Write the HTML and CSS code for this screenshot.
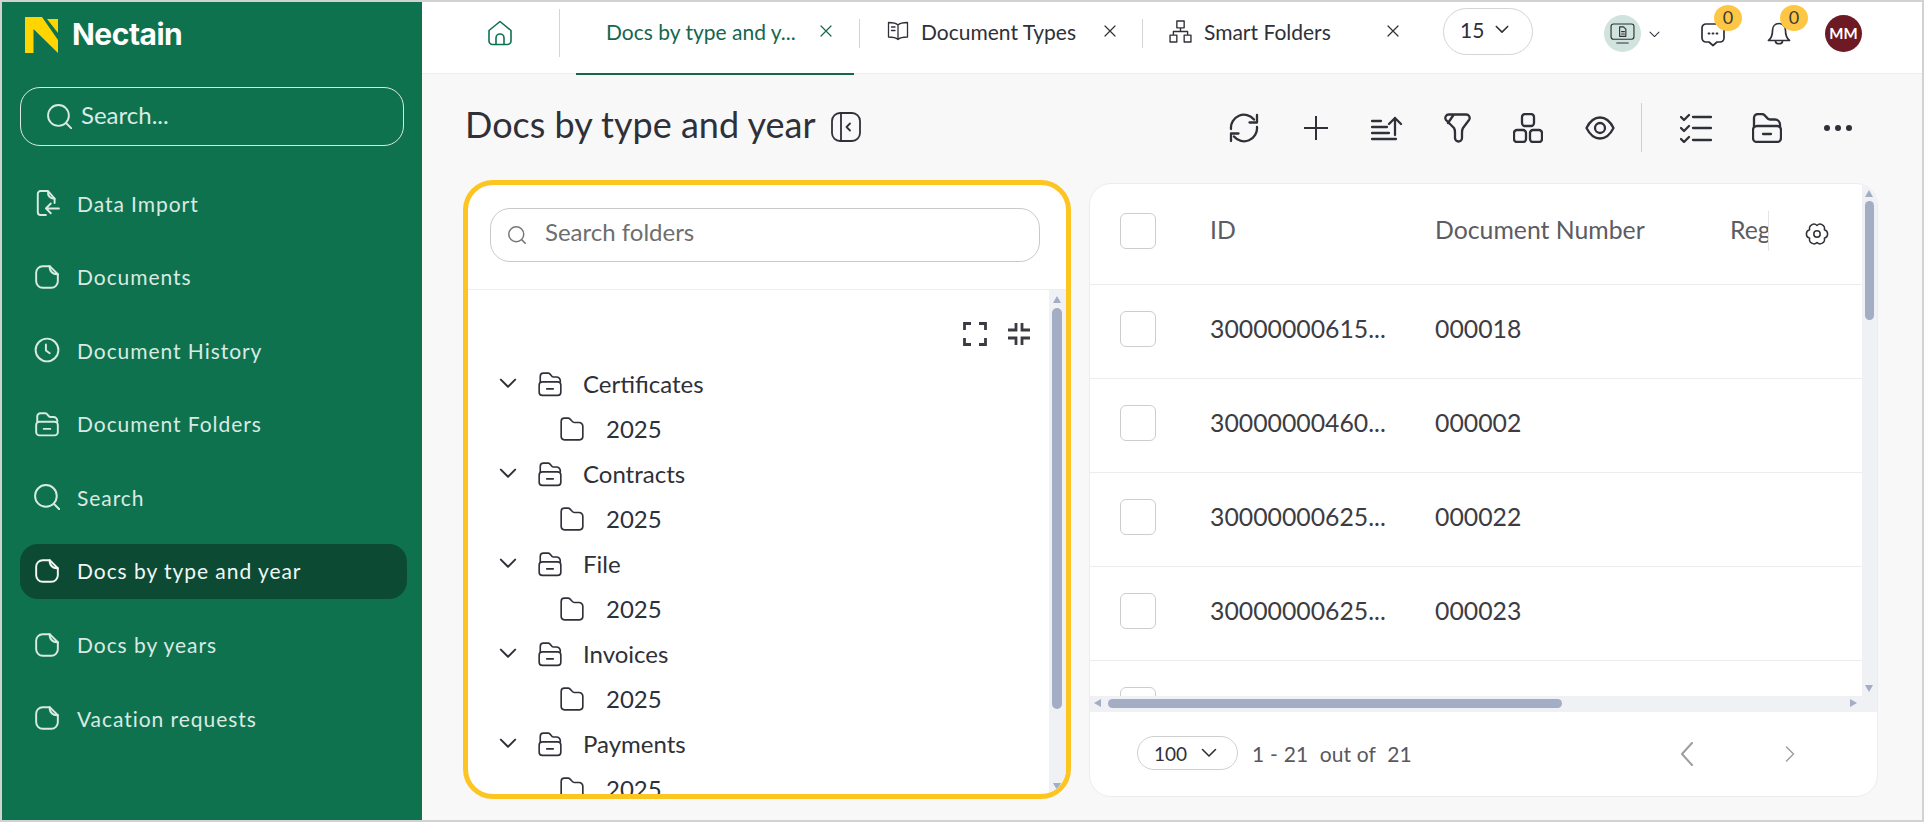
FILE: index.html
```html
<!DOCTYPE html>
<html lang="en">
<head>
    <meta charset="UTF-8">
    <title>Nectain - Docs by type and year</title>
    <link rel="stylesheet" href="styles.css">
</head>
<body>
    <svg class="sprite" xmlns="http://www.w3.org/2000/svg">
        <symbol id="i-doc" viewBox="0 0 24 24"><path d="M8 2h6.5L22 9.500V16a6 6 0 0 1-6 6H8a6 6 0 0 1-6-6V8a6 6 0 0 1 6-6z"/><path d="M14.500 2c-.5 4.500 3 8 7.500 7.500"/></symbol>
        <symbol id="i-import" viewBox="0 0 24 24"><path d="M11 23H6a2.500 2.500 0 0 1-2.500-2.500v-17A2.500 2.500 0 0 1 6 1h7l6 7v4"/><path d="M13 1.500c-.5 3.500 1.500 6.500 6 6.500"/><path d="M23 17H11.500M15.500 12.500 11 17l4.500 4.500"/></symbol>
        <symbol id="i-clock" viewBox="0 0 24 24"><circle cx="12" cy="12" r="10.500"/><path d="M11 7v5.500l3.500 2.500"/></symbol>
        <symbol id="i-folder-minus" viewBox="0 0 24 24"><path d="M3 10V5a3 3 0 0 1 3-3h4.500c2 0 2.500 3.500 4.500 3.500h3a3.500 3.500 0 0 1 3.500 3.500v1"/><rect x="2" y="10" width="20" height="12.500" rx="3"/><path d="M9 16.500h6"/></symbol>
        <symbol id="i-folder" viewBox="0 0 24 24"><path d="M2 5a3 3 0 0 1 3-3h3.500c2.500 0 3 4 5.500 4h4.500A3.500 3.500 0 0 1 22 9.500V19a3 3 0 0 1-3 3H5a3 3 0 0 1-3-3z"/></symbol>
        <symbol id="i-search" viewBox="0 0 24 24"><circle cx="11" cy="11" r="10"/><path d="M18.500 18.500 23.500 23.500"/></symbol>
        <symbol id="i-close" viewBox="0 0 12 12"><path d="M1 1l10 10M11 1 1 11"/></symbol>
        <symbol id="i-chevron" viewBox="0 0 16 10"><path d="M1.500 1.500 8 8l6.500-6.500"/></symbol>
    </svg>

    <div class="app">
        <aside class="sidebar">
            <div class="brand">
                <svg class="brand-logo" viewBox="0 0 33 36"><path d="M0 0h17l16 23v13L8.500 12v24H0z"/><path d="M22 2h11v14z"/></svg>
                <span class="brand-name">Nectain</span>
            </div>
            <div class="side-search">
                <svg class="icon side-search-icon"><use href="#i-search"/></svg>
                <span>Search...</span>
            </div>
            <nav class="nav">
                <a class="nav-item"><svg class="icon"><use href="#i-import"/></svg>Data Import</a>
                <a class="nav-item"><svg class="icon"><use href="#i-doc"/></svg>Documents</a>
                <a class="nav-item"><svg class="icon"><use href="#i-clock"/></svg>Document History</a>
                <a class="nav-item"><svg class="icon"><use href="#i-folder-minus"/></svg>Document Folders</a>
                <a class="nav-item"><svg class="icon"><use href="#i-search"/></svg>Search</a>
                <a class="nav-item active"><svg class="icon"><use href="#i-doc"/></svg>Docs by type and year</a>
                <a class="nav-item"><svg class="icon"><use href="#i-doc"/></svg>Docs by years</a>
                <a class="nav-item"><svg class="icon"><use href="#i-doc"/></svg>Vacation requests</a>
            </nav>
        </aside>

        <div class="main">
            <header class="topbar">
                <div class="home">
                    <svg class="home-icon" viewBox="0 0 26 26"><path d="M2 10.500 13 1.500l11 9V21a3.500 3.500 0 0 1-3.500 3.500h-15A3.500 3.500 0 0 1 2 21z"/><path d="M9 24.500V18a4 4 0 0 1 8 0v6.500"/></svg>
                </div>
                <div class="tab tab-active">
                    <span class="tab-label">Docs by type and y...</span>
                    <svg class="tab-close"><use href="#i-close"/></svg>
                </div>
                <div class="tab tab-types">
                    <svg class="tab-icon" viewBox="0 0 22 20"><path d="M11 4C9 2 6 1.500 1.500 1.500v14.500c4.500 0 7.500.5 9.500 2.500 2-2 5-2.500 9.500-2.500V1.500C16 1.500 13 2 11 4zM11 4v14.500M4.500 6h3.500M4.500 9.500h3.500"/></svg>
                    <span class="tab-label">Document Types</span>
                    <svg class="tab-close"><use href="#i-close"/></svg>
                </div>
                <div class="tab tab-folders">
                    <svg class="tab-icon" viewBox="0 0 22 22"><path d="M7.500 1h7v6.500h-7zM1 14.500h6.500V21H1zM14.500 14.500H21V21h-6.500zM11 7.500v3.500M4.200 14.500V11h13.600v3.500"/></svg>
                    <span class="tab-label">Smart Folders</span>
                    <svg class="tab-close"><use href="#i-close"/></svg>
                </div>
                <div class="count-select">15<svg class="chev-sm"><use href="#i-chevron"/></svg></div>
                <div class="top-right">
                    <div class="mode">
                        <svg viewBox="0 0 26 22"><rect x="1" y="1" width="24" height="16" rx="2.500"/><path d="M7 21h12M10 4h4l2.500 2.500V14h-6.500zM12 9h3M12 11.500h3"/></svg>
                    </div>
                    <svg class="chev-mode"><use href="#i-chevron"/></svg>
                    <div class="notify notify-chat">
                        <svg viewBox="0 0 26 26"><path d="M6 3h14a4 4 0 0 1 4 4v10a4 4 0 0 1-4 4h-3l-4 3.500L9 21H6a4 4 0 0 1-4-4V7a4 4 0 0 1 4-4z"/><path class="dots" d="M8.500 12.500h1M12.500 12.500h1M16.500 12.500h1"/></svg>
                        <span class="badge">0</span>
                    </div>
                    <div class="notify notify-bell">
                        <svg viewBox="0 0 26 26"><path d="M13 2.500c-4 0-6.500 3-6.500 7 0 6-1.500 8-4 10h21c-2.500-2-4-4-4-10 0-4-2.500-7-6.500-7z"/><path d="M9.500 20.500c.5 3 6.500 3 7 0"/></svg>
                        <span class="badge">0</span>
                    </div>
                    <div class="avatar">MM</div>
                </div>
            </header>

            <section class="content">
                <div class="page-head">
                    <h1>Docs by type and year</h1>
                    <svg class="panel-toggle" viewBox="0 0 30 30"><rect x="1" y="1" width="28" height="28" rx="8"/><path d="M10 1v28M19 11.500 15.500 15l3.500 3.500"/></svg>
                    <div class="toolbar">
                        <svg class="tool tool-refresh" viewBox="0 0 32 30"><path d="M3 16A13 13 0 0 1 26 6.500M29 14a13 13 0 0 1-23 9.500"/><path d="M29 2v7.500h-7.500M3 28v-7.500h7.500"/></svg>
                        <svg class="tool tool-plus" viewBox="0 0 24 24"><path d="M12 0v24M0 12h24"/></svg>
                        <svg class="tool tool-sort" viewBox="0 0 32 24"><path d="M1 5h9M1 11h15M1 17h17M1 23h24M24 19V2M18 8l6-6 6 6"/></svg>
                        <svg class="tool tool-filter" viewBox="0 0 27 30"><path d="M5 1.500h17a3.500 3.500 0 0 1 3 5.500l-6 8c-1 1.500-1 3-1 5v5a3.500 3.500 0 0 1-7 0v-5c0-2 0-3.500-1-5L2 7A3.500 3.500 0 0 1 5 1.500zM9.500 2 4 10"/></svg>
                        <svg class="tool tool-blocks" viewBox="0 0 30 30"><rect x="9" y="1" width="12" height="12" rx="3"/><rect x="1" y="17" width="12" height="12" rx="3"/><rect x="17" y="17" width="12" height="12" rx="3"/></svg>
                        <svg class="tool tool-eye" viewBox="0 0 30 24"><path d="M1.500 12C5 5 9.500 1.500 15 1.500S25 5 28.500 12C25 19 20.500 22.500 15 22.500S5 19 1.500 12z"/><circle cx="15" cy="12" r="5"/></svg>
                        <span class="tool-sep"></span>
                        <svg class="tool tool-checks" viewBox="0 0 32 30"><path d="M1 4l3 3 5-5M1 15l3 3 5-5M1 26l3 3 5-5M13 4h18M13 15h18M13 27h18"/></svg>
                        <svg class="tool tool-folder" viewBox="0 0 30 30"><path d="M2 14V5a4 4 0 0 1 4-4h4c4 0 4 5.500 8 5.500h5a5 5 0 0 1 5 5v2.500"/><rect x="1" y="13" width="28" height="16" rx="4"/><path d="M11 21h8"/></svg>
                        <svg class="tool tool-dots" viewBox="0 0 28 6"><circle cx="3" cy="3" r="3"/><circle cx="14" cy="3" r="3"/><circle cx="25" cy="3" r="3"/></svg>
                    </div>
                </div>

                <div class="panels">
                    <div class="tree-panel">
                        <div class="tree-search-wrap">
                            <div class="tree-search">
                                <svg class="icon"><use href="#i-search"/></svg>
                                <span>Search folders</span>
                            </div>
                        </div>
                        <div class="tree-body">
                            <div class="tree-scroll">
                                <div class="tree-tools">
                                    <svg viewBox="0 0 24 24"><path d="M1.500 8V1.500H8M16 1.500h6.500V8M22.500 16v6.500H16M8 22.500H1.500V16"/></svg>
                                    <svg viewBox="0 0 24 24"><path d="M9 1v7H1M15 1v7h8M9 23v-7H1M15 23v-7h8"/></svg>
                                </div>
                                <div class="tree-row"><svg class="chev"><use href="#i-chevron"/></svg><svg class="folder-icon"><use href="#i-folder-minus"/></svg>Certificates</div>
                                <div class="tree-row sub"><svg class="folder-icon"><use href="#i-folder"/></svg>2025</div>
                                <div class="tree-row"><svg class="chev"><use href="#i-chevron"/></svg><svg class="folder-icon"><use href="#i-folder-minus"/></svg>Contracts</div>
                                <div class="tree-row sub"><svg class="folder-icon"><use href="#i-folder"/></svg>2025</div>
                                <div class="tree-row"><svg class="chev"><use href="#i-chevron"/></svg><svg class="folder-icon"><use href="#i-folder-minus"/></svg>File</div>
                                <div class="tree-row sub"><svg class="folder-icon"><use href="#i-folder"/></svg>2025</div>
                                <div class="tree-row"><svg class="chev"><use href="#i-chevron"/></svg><svg class="folder-icon"><use href="#i-folder-minus"/></svg>Invoices</div>
                                <div class="tree-row sub"><svg class="folder-icon"><use href="#i-folder"/></svg>2025</div>
                                <div class="tree-row"><svg class="chev"><use href="#i-chevron"/></svg><svg class="folder-icon"><use href="#i-folder-minus"/></svg>Payments</div>
                                <div class="tree-row sub"><svg class="folder-icon"><use href="#i-folder"/></svg>2025</div>
                            </div>
                            <div class="vbar tree-bar">
                                <span class="arrow-up"></span>
                                <span class="vthumb"></span>
                                <span class="arrow-down"></span>
                            </div>
                        </div>
                    </div>

                    <div class="table-card">
                        <div class="table-area">
                            <div class="table-wrap">
                                <div class="t-row t-head">
                                    <span class="check"></span>
                                    <span class="c-id">ID</span>
                                    <span class="c-num">Document Number</span>
                                    <span class="c-reg">Reg</span>
                                    <svg class="gear" viewBox="0 0 24 24"><circle cx="12" cy="12" r="3.200"/><path d="M19.360 7.750A4.400 4.400 0 0 0 12 3.500 4.400 4.400 0 0 0 4.640 7.750 4.400 4.400 0 0 0 4.640 16.250 4.400 4.400 0 0 0 12 20.500 4.400 4.400 0 0 0 19.360 16.250 4.400 4.400 0 0 0 19.360 7.750z"/></svg>
                                </div>
                                <div class="t-row"><span class="check"></span><span class="c-id">30000000615...</span><span class="c-num">000018</span></div>
                                <div class="t-row"><span class="check"></span><span class="c-id">30000000460...</span><span class="c-num">000002</span></div>
                                <div class="t-row"><span class="check"></span><span class="c-id">30000000625...</span><span class="c-num">000022</span></div>
                                <div class="t-row"><span class="check"></span><span class="c-id">30000000625...</span><span class="c-num">000023</span></div>
                                <div class="t-row"><span class="check"></span><span class="c-id">30000000625...</span><span class="c-num">000024</span></div>
                            </div>
                            <div class="vbar table-bar">
                                <span class="arrow-up"></span>
                                <span class="vthumb"></span>
                                <span class="arrow-down"></span>
                            </div>
                        </div>
                        <div class="hbar">
                            <span class="arrow-left"></span>
                            <span class="hthumb"></span>
                            <span class="arrow-right"></span>
                        </div>
                        <div class="pager">
                            <div class="page-size">100<svg class="chev-xs"><use href="#i-chevron"/></svg></div>
                            <span class="page-info">1 - 21&nbsp; out of&nbsp; 21</span>
                            <svg class="page-prev" viewBox="0 0 14 24"><path d="M12 1 2 12l10 11"/></svg>
                            <svg class="page-next" viewBox="0 0 10 16"><path d="M1.500 1 8.500 8l-7 7"/></svg>
                        </div>
                    </div>
                </div>
            </section>
        </div>
    </div>
</body>
</html>
```

FILE: styles.css
```css
* {
    box-sizing: border-box;
}
html, body {
    margin: 0;
    height: 100%;
    overflow: hidden;
}
body {
    font-family: Lato, "Open Sans", sans-serif;
    color: #2f3038;
    background-color: #d2d2d2;
    padding: 2px;
}
svg {
    display: block;
    flex-shrink: 0;
    fill: none;
    stroke: currentColor;
    stroke-width: 1.8;
    stroke-linecap: round;
    stroke-linejoin: round;
}
.sprite {
    display: none;
}
.app {
    display: flex;
    height: 818px;
    width: 1920px;
    background-color: #f8f8f8;
}

/* sidebar */
.sidebar {
    width: 420px;
    flex-shrink: 0;
    background-color: #0f724f;
    color: #d9eae3;
    padding: 15px 15px 0 18px;
}
.brand {
    display: flex;
    align-items: center;
    gap: 14px;
    padding-left: 5px;
    height: 36px;
}
.brand-logo {
    width: 33px;
    height: 36px;
    fill: #ffd500;
    stroke: none;
}
.brand-name {
    font-family: Inter, sans-serif;
    font-weight: 700;
    font-size: 30px;
    letter-spacing: -0.5px;
    color: #fff;
    margin-bottom: 2px;
}
.side-search {
    display: flex;
    align-items: center;
    gap: 9px;
    height: 59px;
    width: 384px;
    margin-top: 34px;
    padding-left: 26px;
    border: 1px solid #d9eae3;
    border-radius: 20px;
    font-size: 24px;
}
.side-search span {
    margin-bottom: 4px;
}
.side-search-icon {
    width: 25px;
    height: 25px;
}
.nav {
    display: flex;
    flex-direction: column;
    gap: 18.600px;
    margin-top: 30px;
    width: 387px;
}
.nav-item {
    display: flex;
    align-items: center;
    gap: 17px;
    height: 55px;
    padding: 0 0 1px 14px;
    font-size: 21px;
    letter-spacing: 0.95px;
    border-radius: 18px;
}
.nav-item .icon {
    width: 26px;
    height: 26px;
}
.nav-item.active {
    background-color: #0d4a34;
    color: #f2f7f5;
}

/* top bar */
.main {
    flex: 1;
    min-width: 0;
    display: flex;
    flex-direction: column;
}
.topbar {
    display: flex;
    align-items: stretch;
    height: 72px;
    background-color: #fff;
    border-bottom: 1px solid #eeeeee;
    position: relative;
}
.home {
    width: 138px;
    padding-left: 65px;
    display: flex;
    align-items: center;
    position: relative;
}
.home::after {
    content: "";
    position: absolute;
    right: 0;
    top: 7px;
    height: 48px;
    width: 1px;
    background-color: #d4d4d4;
}
.home-icon {
    width: 26px;
    height: 26px;
    color: #0f724f;
    stroke-width: 1.600;
    margin-bottom: 10px;
}
.tab {
    display: flex;
    align-items: center;
    height: 72px;
    padding-bottom: 14px;
    font-size: 21px;
    position: relative;
    white-space: nowrap;
}
.tab::after {
    content: "";
    position: absolute;
    right: 0;
    top: 17px;
    height: 29px;
    width: 1px;
    background-color: #d4d4d4;
}
.tab-active {
    margin-left: 16px;
    width: 284px;
    padding-left: 30px;
    color: #14674d;
}
.tab-active::before {
    content: "";
    position: absolute;
    left: 0;
    right: 6px;
    bottom: -1px;
    height: 2px;
    background-color: #14674d;
}
.tab-active .tab-label {
    width: 190px;
    margin-right: 24px;
}
.tab-close {
    width: 12px;
    height: 12px;
    stroke-width: 1.200;
}
.tab-types {
    width: 283px;
    padding-left: 27px;
}
.tab-types .tab-label {
    width: 183px;
    margin-left: 12px;
}
.tab-icon {
    width: 22px;
    height: 20px;
    stroke-width: 1.300;
}
.tab-folders {
    width: 300px;
    padding-left: 26px;
}
.tab-folders::after {
    display: none;
}
.tab-folders .tab-icon {
    width: 23px;
    height: 23px;
}
.tab-folders .tab-label {
    width: 183px;
    margin-left: 12px;
}
.count-select {
    display: flex;
    align-items: center;
    gap: 11px;
    align-self: flex-start;
    margin: 6px 0 0 0;
    width: 90px;
    height: 47px;
    padding: 0 0 4px 16px;
    border: 1px solid #d4d4d4;
    border-radius: 24px;
    font-size: 21px;
    background-color: #fff;
}
.chev-sm {
    width: 14px;
    height: 9px;
    stroke-width: 1.800;
}
.top-right {
    flex: 1;
    position: relative;
}
.mode {
    position: absolute;
    left: 71px;
    top: 13px;
    width: 37px;
    height: 37px;
    border-radius: 50%;
    background-color: #d0e3dc;
    display: flex;
    align-items: center;
    justify-content: center;
}
.mode svg {
    width: 25px;
    height: 21px;
    stroke-width: 1.200;
}
.chev-mode {
    position: absolute;
    left: 116px;
    top: 29px;
    width: 11px;
    height: 7px;
    stroke-width: 1.500;
}
.notify {
    position: absolute;
    top: 19px;
    width: 26px;
    height: 26px;
}
.notify svg {
    width: 26px;
    height: 26px;
    stroke-width: 1.700;
}
.notify .dots {
    stroke-width: 1.800;
}
.notify-chat {
    left: 167px;
}
.notify-bell {
    left: 233px;
}
.badge {
    position: absolute;
    left: 14px;
    top: -16px;
    width: 28px;
    height: 26px;
    border-radius: 50%;
    background-color: #fdc644;
    font-size: 18px;
    line-height: 24px;
    text-align: center;
    color: #3b3b3b;
}
.avatar {
    position: absolute;
    left: 292px;
    top: 13px;
    width: 37px;
    height: 37px;
    border-radius: 50%;
    background-color: #6e1a25;
    color: #fff;
    font-size: 15px;
    font-weight: 700;
    line-height: 37px;
    text-align: center;
}

/* page head */
.content {
    flex: 1;
    min-height: 0;
    padding: 0 41px 0 41px;
}
.page-head {
    display: flex;
    align-items: center;
    height: 107px;
    padding-left: 2px;
}
h1 {
    margin: 0 15px 7px 0;
    font-size: 36px;
    font-weight: 400;
    white-space: nowrap;
}
.panel-toggle {
    width: 30px;
    height: 30px;
    stroke-width: 1.800;
    margin-bottom: 2px;
}
.toolbar {
    flex: 1;
    display: flex;
    align-items: center;
    position: relative;
    height: 50px;
    margin-left: 2px;
}
.tool {
    position: absolute;
    top: 50%;
    transform: translateY(-50%);
    stroke-width: 2.300;
}
.tool-refresh { left: 365px; width: 32px; height: 30px; }
.tool-plus { left: 441px; width: 24px; height: 24px; stroke-width: 2; }
.tool-sort { left: 508px; width: 32px; height: 26px; }
.tool-filter { left: 581px; width: 27px; height: 30px; }
.tool-blocks { left: 650px; width: 30px; height: 30px; }
.tool-eye { left: 722px; width: 30px; height: 25px; }
.tool-checks { left: 817px; width: 32px; height: 30px; }
.tool-folder { left: 889px; width: 30px; height: 30px; }
.tool-dots { left: 961px; width: 28px; height: 7px; fill: currentColor; stroke: none; }
.tool-sep {
    position: absolute;
    left: 778px;
    top: 0;
    width: 1px;
    height: 49px;
    background-color: #cfcfcf;
}

/* panels */
.panels {
    display: flex;
    align-items: flex-start;
    gap: 18px;
}
.tree-panel {
    width: 608px;
    height: 619px;
    margin-top: -1px;
    background-color: #fff;
    border: 5px solid #fcc521;
    border-radius: 30px;
    overflow: hidden;
    display: flex;
    flex-direction: column;
}
.tree-search-wrap {
    height: 105px;
    flex-shrink: 0;
    padding: 23px 26px 0 22px;
    border-bottom: 1px solid #eeeeee;
}
.tree-search {
    display: flex;
    align-items: center;
    gap: 19px;
    height: 54px;
    padding-left: 17px;
    border: 1px solid #c9c9c9;
    border-radius: 20px;
    font-size: 24px;
    color: #6e6e6e;
}
.tree-search span {
    margin-bottom: 7px;
}
.tree-search .icon {
    width: 18px;
    height: 18px;
    stroke-width: 2;
    color: #777;
}
.tree-body {
    flex: 1;
    min-height: 0;
    display: flex;
}
.tree-scroll {
    flex: 1;
    min-width: 0;
    overflow: hidden;
    padding: 0 18px 0 31px;
}
.tree-tools {
    display: flex;
    justify-content: flex-end;
    gap: 20px;
    padding-top: 32px;
    height: 71px;
}
.tree-tools svg {
    width: 24px;
    height: 24px;
    stroke-width: 2.800;
    stroke-linecap: butt;
    stroke-linejoin: miter;
    color: #3a3a42;
}
.tree-row {
    display: flex;
    align-items: center;
    height: 45px;
    font-size: 24px;
    white-space: nowrap;
}
.tree-row.sub {
    padding-left: 60px;
}
.chev {
    width: 18px;
    height: 11px;
    margin-right: 20px;
}
.folder-icon {
    width: 26px;
    height: 26px;
    margin-right: 20px;
    stroke-width: 1.500;
}
.sub .folder-icon {
    margin-right: 21px;
}
.vbar {
    width: 17px;
    flex-shrink: 0;
    background-color: #eff1f5;
    position: relative;
}
.vthumb {
    position: absolute;
    left: 3px;
    width: 10px;
    border-radius: 5px;
    background-color: #a3adc4;
}
.arrow-up, .arrow-down {
    position: absolute;
    left: 4px;
    width: 0;
    height: 0;
    border-left: 4.500px solid transparent;
    border-right: 4.500px solid transparent;
}
.arrow-up {
    top: 6px;
    border-bottom: 7px solid #a3adc4;
}
.arrow-down {
    bottom: 4px;
    border-top: 7px solid #a3adc4;
}
.tree-bar .vthumb {
    top: 18px;
    height: 401px;
}

/* table */
.table-card {
    width: 789px;
    height: 614px;
    margin-top: 2px;
    background-color: #fff;
    border: 1px solid #ececec;
    border-radius: 22px;
    overflow: hidden;
    display: flex;
    flex-direction: column;
}
.table-area {
    display: flex;
    height: 512px;
    flex-shrink: 0;
}
.table-wrap {
    flex: 1;
    min-width: 0;
    overflow: hidden;
}
.t-row {
    display: flex;
    align-items: center;
    height: 94px;
    border-bottom: 1px solid #ececec;
    padding: 0 0 6px 30px;
    font-size: 24.800px;
    color: #3c3c42;
    position: relative;
    white-space: nowrap;
}
.t-head {
    height: 101px;
    padding-bottom: 6px;
    color: #5c5c62;
}
.check {
    width: 36px;
    height: 36px;
    border: 1px solid #cdcdcd;
    border-radius: 6px;
    flex-shrink: 0;
}
.c-id {
    width: 225px;
    margin: 0 0 1px 54px;
}
.c-num {
    width: 295px;
    margin-bottom: 1px;
}
.t-head .c-id, .t-head .c-num {
    margin-bottom: 4px;
}
.c-reg {
    width: 39px;
    overflow: hidden;
    border-right: 1px solid #e4e4e4;
    height: 40px;
    line-height: 38px;
}
.gear {
    position: absolute;
    right: 33px;
    top: 38px;
    width: 24px;
    height: 24px;
    stroke-width: 1.500;
    color: #2f3038;
}
.table-bar {
    width: 15px;
}
.table-bar .vthumb {
    top: 17px;
    width: 9px;
    height: 119px;
}
.table-bar .arrow-up, .table-bar .arrow-down {
    left: 3px;
}
.hbar {
    height: 16px;
    flex-shrink: 0;
    background-color: #eff1f5;
    position: relative;
}
.hthumb {
    position: absolute;
    left: 18px;
    top: 3px;
    width: 454px;
    height: 9px;
    border-radius: 5px;
    background-color: #a3adc4;
}
.arrow-left, .arrow-right {
    position: absolute;
    top: 3px;
    width: 0;
    height: 0;
    border-top: 4.500px solid transparent;
    border-bottom: 4.500px solid transparent;
}
.arrow-left {
    left: 4px;
    border-right: 7px solid #a3adc4;
}
.arrow-right {
    right: 20px;
    border-left: 7px solid #a3adc4;
}
.pager {
    flex: 1;
    display: flex;
    align-items: center;
    padding: 0 0 2px 47px;
    position: relative;
}
.page-size {
    display: flex;
    align-items: center;
    gap: 13px;
    width: 101px;
    height: 34px;
    padding-left: 16px;
    border: 1px solid #cfcfcf;
    border-radius: 17px;
    font-size: 19px;
}
.chev-xs {
    width: 18px;
    height: 10px;
    stroke-width: 1.600;
}
.page-info {
    margin-left: 14px;
    font-size: 21px;
    word-spacing: 0.500px;
    color: #58585e;
}
.page-prev, .page-next {
    position: absolute;
    color: #9e9e9e;
}
.page-prev {
    left: 590px;
    top: 30px;
    width: 14px;
    height: 24px;
    stroke-width: 2;
}
.page-next {
    left: 695px;
    top: 34px;
    width: 10px;
    height: 16px;
    stroke-width: 1.500;
}
```
